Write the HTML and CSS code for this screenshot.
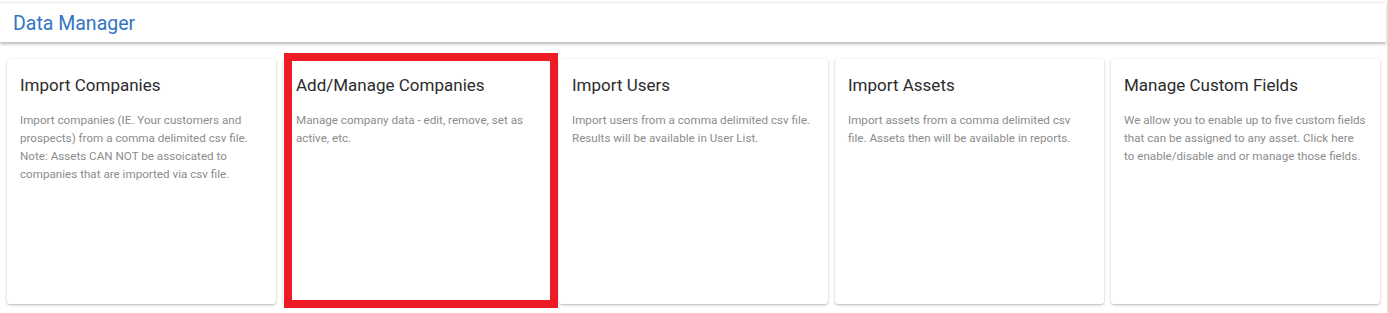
FILE: index.html
```html
<!DOCTYPE html>
<html lang="en">
<head>
<meta charset="utf-8">
<title>Data Manager</title>
<link rel="stylesheet" href="styles.css">
</head>
<body>
<div class="page">
  <header class="topbar">
    <h1 class="topbar-title">Data Manager</h1>
  </header>
  <main class="cards">
    <section class="card">
      <h2 class="card-title">Import Companies</h2>
      <p class="card-text">Import companies (IE. Your customers and prospects) from a comma delimited csv file. Note: Assets CAN NOT be assoicated to companies that are imported via csv file.</p>
    </section>
    <section class="card card-highlight">
      <h2 class="card-title">Add/Manage Companies</h2>
      <p class="card-text">Manage company data - edit, remove, set as active, etc.</p>
      <span class="highlight-frame"></span>
    </section>
    <section class="card">
      <h2 class="card-title">Import Users</h2>
      <p class="card-text">Import users from a comma delimited csv file. Results will be available in User List.</p>
    </section>
    <section class="card">
      <h2 class="card-title">Import Assets</h2>
      <p class="card-text">Import assets from a comma delimited csv file. Assets then will be available in reports.</p>
    </section>
    <section class="card">
      <h2 class="card-title">Manage Custom Fields</h2>
      <p class="card-text">We allow you to enable up to five custom fields that can be assigned to any asset. Click here to enable/disable and or manage those fields.</p>
    </section>
  </main>
</div>
</body>
</html>
```

FILE: styles.css
```css
* { box-sizing: border-box; }

html, body {
  margin: 0;
  padding: 0;
  background: #ffffff;
  font-family: Roboto, "Liberation Sans", Arial, sans-serif;
}

.page {
  width: 1388px;
  height: 313px;
  padding-top: 2px;
  border-right: 1px solid #e2e2e2;
  overflow: hidden;
}

.topbar {
  height: 40px;
  margin-right: 1px;
  background: #ffffff;
  border-top: 1px solid #ececec;
  box-shadow: 0 2px 3px rgba(0, 0, 0, 0.28);
  display: flex;
  align-items: center;
  padding-left: 13px;
}

.topbar-title {
  margin: 0;
  font-size: 19.5px;
  font-weight: 400;
  color: #3474c3;
  line-height: 1;
  padding-top: 2px;
}

.cards {
  display: grid;
  grid-template-columns: repeat(5, 269px);
  column-gap: 7px;
  padding: 17px 0 0 7px;
}

.card {
  position: relative;
  height: 245px;
  background: #ffffff;
  border-radius: 3px;
  box-shadow: 0 1px 3px rgba(0, 0, 0, 0.22), 0 1px 1px rgba(0, 0, 0, 0.08);
  padding: 16px 14px 0 13px;
}

.card-title {
  margin: 0;
  font-size: 17px;
  font-weight: 400;
  color: #2b2b2b;
  line-height: 20px;
}

.card-text {
  margin: 16px 0 0;
  font-size: 11.65px;
  line-height: 18px;
  color: #8c8c8c;
}

.highlight-frame {
  position: absolute;
  left: 1px;
  top: -6px;
  width: 274px;
  height: 255px;
  border: 8px solid #ed1c24;
  pointer-events: none;
}
```
